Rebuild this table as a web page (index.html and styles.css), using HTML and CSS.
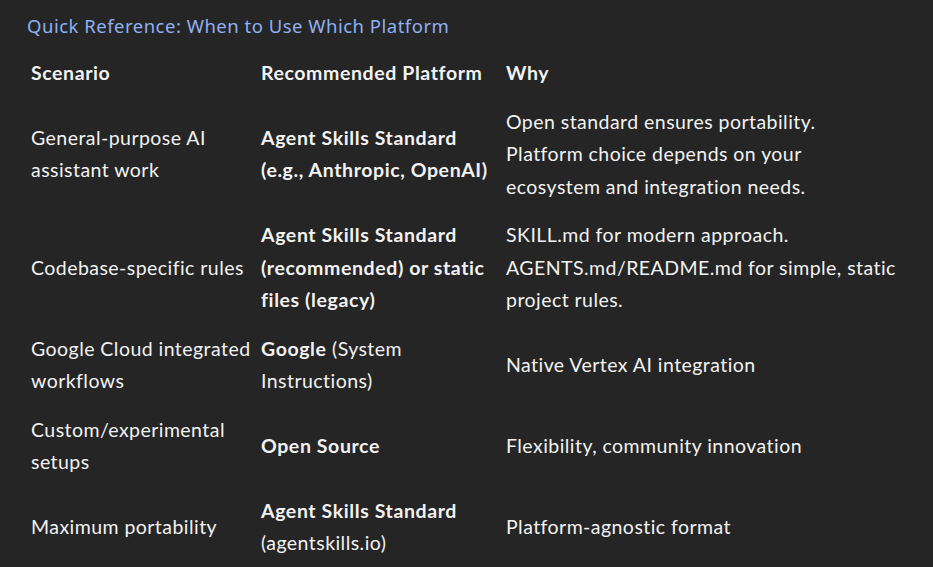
FILE: index.html
```html
<!DOCTYPE html>
<html lang="en">
<head>
<meta charset="utf-8">
<title>Quick Reference</title>
<link rel="stylesheet" href="styles.css">
</head>
<body>
<main class="doc">
  <h3 class="doc-title">Quick Reference: When to Use Which Platform</h3>
  <table class="ref-table">
    <colgroup>
      <col class="c-scenario">
      <col class="c-platform">
      <col class="c-why">
    </colgroup>
    <thead>
      <tr><th>Scenario</th><th>Recommended Platform</th><th>Why</th></tr>
    </thead>
    <tbody>
      <tr>
        <td>General-purpose AI<br>assistant work</td>
        <td><strong>Agent Skills Standard<br>(e.g., Anthropic, OpenAI)</strong></td>
        <td>Open standard ensures portability.<br>Platform choice depends on your<br>ecosystem and integration needs.</td>
      </tr>
      <tr>
        <td>Codebase-specific rules</td>
        <td><strong>Agent Skills Standard<br>(recommended) or static<br>files (legacy)</strong></td>
        <td>SKILL.md for modern approach.<br>AGENTS.md/README.md for simple, static<br>project rules.</td>
      </tr>
      <tr>
        <td>Google Cloud integrated<br>workflows</td>
        <td><strong>Google</strong> (System<br>Instructions)</td>
        <td>Native Vertex AI integration</td>
      </tr>
      <tr>
        <td>Custom/experimental<br>setups</td>
        <td><strong>Open Source</strong></td>
        <td>Flexibility, community innovation</td>
      </tr>
      <tr>
        <td>Maximum portability</td>
        <td><strong>Agent Skills Standard</strong><br>(agentskills.io)</td>
        <td>Platform-agnostic format</td>
      </tr>
    </tbody>
  </table>
</main>
</body>
</html>
```

FILE: styles.css
```css
html, body {
  margin: 0;
  padding: 0;
  background: #252525;
}

.doc {
  padding: 10px 27px 0 27px;
  color: #f2f2f2;
}

.doc-title {
  margin: 0 0 7px 0;
  font-family: "Noto Sans", "Open Sans", sans-serif;
  font-weight: 400;
  font-size: 18.5px;
  letter-spacing: 0.5px;
  line-height: 32px;
  color: #8fb1f2;
}

.ref-table {
  border-collapse: collapse;
  table-layout: fixed;
  width: 880px;
  font-family: Lato, "Noto Sans", sans-serif;
  font-size: 19.5px;
  letter-spacing: 0.45px;
  line-height: 32.5px;
  color: #f2f2f2;
}

.c-scenario { width: 230px; }
.c-platform { width: 245px; }

.ref-table th,
.ref-table td {
  padding: 8px 4px;
  text-align: left;
  vertical-align: middle;
  white-space: nowrap;
}

.ref-table th,
.ref-table strong {
  font-weight: 700;
  letter-spacing: 0.6px;
}
```
